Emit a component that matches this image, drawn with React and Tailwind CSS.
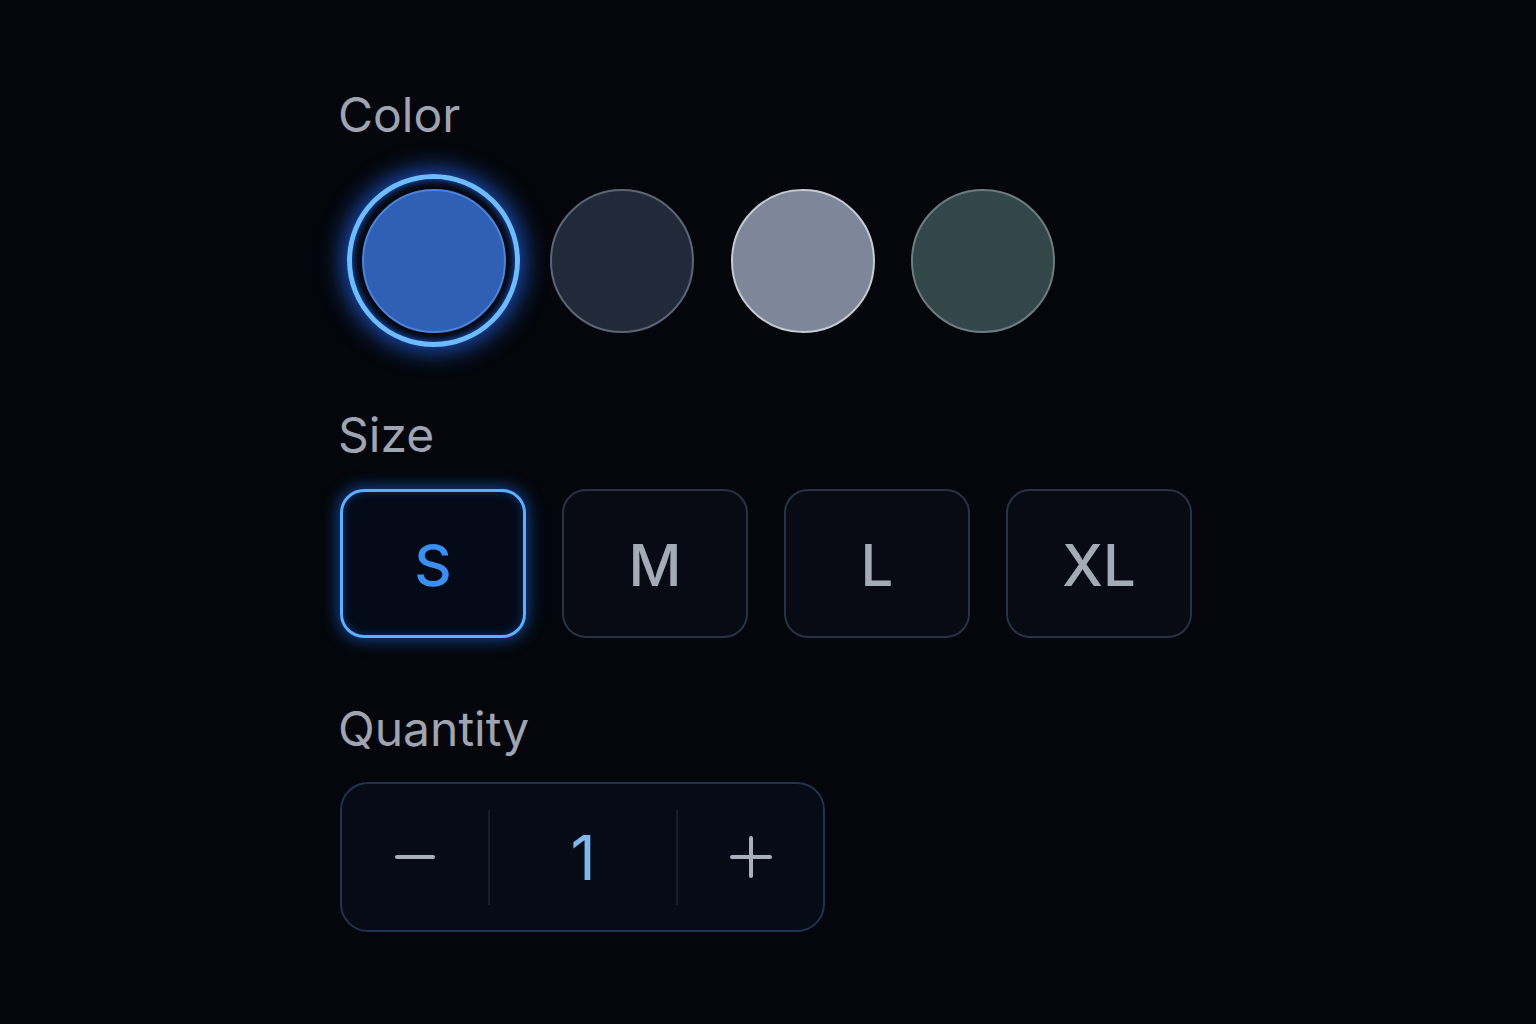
import { useState } from "react";

const swatches = [
  { id: "blue", fill: "bg-[#2f60b6]", ring: "border-[#4b83dc]", gap: "" },
  { id: "slate", fill: "bg-[#222a3a]", ring: "border-[#5b6679]", gap: "ml-[15px]" },
  { id: "silver", fill: "bg-[#7e879a]", ring: "border-[#c5cad3]", gap: "ml-[8px]" },
  { id: "teal", fill: "bg-[#33474a]", ring: "border-[#6c7c7f]", gap: "ml-[7px]" },
];

const sizes = ["S", "M", "L", "XL"];

export default function App() {
  const [color, setColor] = useState("blue");
  const [size, setSize] = useState("S");
  const [qty, setQty] = useState(1);

  return (
    <main className="min-h-screen w-full bg-[#04060b] font-['Inter','Liberation_Sans',sans-serif]">
      <div className="pl-[340px] pt-[91px]">
        <h2 className="-ml-[2px] text-5xl leading-[48px] text-[#9ea4b1]">Color</h2>
        <div className="mt-[35px] ml-[7px] flex items-center">
          {swatches.map((s) => {
            const active = color === s.id;
            return (
              <button
                key={s.id}
                onClick={() => setColor(s.id)}
                className={`flex h-[173px] w-[173px] items-center justify-center rounded-full ${s.gap} ${
                  active
                    ? "border-[5px] border-[#6cbcff] shadow-[0_0_24px_4px_rgba(37,110,255,0.75),inset_0_0_8px_rgba(37,110,255,0.9)]"
                    : ""
                }`}
              >
                <span className={`block h-[144px] w-[144px] rounded-full border-[2px] ${s.fill} ${s.ring}`} />
              </button>
            );
          })}
        </div>

        <h2 className="-ml-[2px] mt-[64px] text-5xl leading-[48px] text-[#9ea4b1]">Size</h2>
        <div className="mt-[30px] flex items-center gap-[36px]">
          {sizes.map((s) => {
            const active = size === s;
            return (
              <button
                key={s}
                onClick={() => setSize(s)}
                className={`flex h-[149px] w-[186px] items-center justify-center rounded-[24px] pt-[3px] text-[58px] font-medium ${
                  active
                    ? "border-[3px] border-[#5ab0ff] bg-[#040a18] text-[#3a8ff0] shadow-[0_0_16px_2px_rgba(30,120,255,0.55),inset_0_0_10px_rgba(30,120,255,0.35)]"
                    : "border-[2px] border-[#283245] bg-[#080b14] text-[#a4aab6]"
                }`}
              >
                {s}
              </button>
            );
          })}
        </div>

        <h2 className="-ml-[2px] mt-[67px] text-5xl leading-[48px] text-[#9ea4b1]">Quantity</h2>
        <div className="mt-[29px] flex h-[150px] w-[485px] items-center rounded-[28px] border-[2px] border-[#1f3354] bg-[#070b15]">
          <button
            onClick={() => setQty((q) => Math.max(1, q - 1))}
            className="flex h-full w-[146px] items-center justify-center"
          >
            <svg width="40" height="40" viewBox="0 0 40 40" fill="none" stroke="#a8b0c0" strokeWidth="4" strokeLinecap="round">
              <path d="M2 20h36" />
            </svg>
          </button>
          <div className="h-[95px] w-[2px] bg-[#161d2b]" />
          <div className="flex h-full w-[186px] items-center justify-center text-[62px] text-[#80b8f2]">{qty}</div>
          <div className="h-[95px] w-[2px] bg-[#161d2b]" />
          <button
            onClick={() => setQty((q) => q + 1)}
            className="flex h-full flex-1 items-center justify-center"
          >
            <svg width="42" height="42" viewBox="0 0 42 42" fill="none" stroke="#a8b0c0" strokeWidth="4" strokeLinecap="round">
              <path d="M2 21h38M21 2v38" />
            </svg>
          </button>
        </div>
      </div>
    </main>
  );
}
